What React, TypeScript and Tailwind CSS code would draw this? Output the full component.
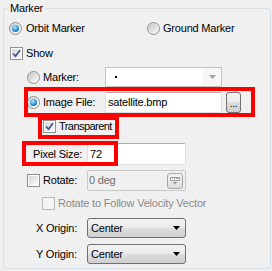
import React from "react";

function Radio({ checked = false }: { checked?: boolean }) {
  return (
    <span className="flex h-[13px] w-[13px] shrink-0 items-center justify-center rounded-full border border-[#8e8f8f] bg-[linear-gradient(135deg,#d0d0d0,#ffffff)]">
      {checked ? (
        <span className="h-[7px] w-[7px] rounded-full bg-[radial-gradient(circle_at_40%_35%,#b5ecff,#2a8fd6_55%,#0b4a86)]" />
      ) : (
        <span className="h-[9px] w-[9px] rounded-full bg-[linear-gradient(135deg,#c9c9c9,#f7f7f7)]" />
      )}
    </span>
  );
}

function Check({ checked = false, disabled = false }: { checked?: boolean; disabled?: boolean }) {
  return (
    <span
      className={
        disabled
          ? "flex h-[13px] w-[13px] shrink-0 border border-[#b8b8b8] bg-[#f4f4f4]"
          : "flex h-[13px] w-[13px] shrink-0 items-center justify-center border border-[#8e8f8f] bg-white p-[1px]"
      }
    >
      {!disabled && (
        <span className="relative h-full w-full bg-[linear-gradient(135deg,#d6d6d6,#fafafa)]">
          {checked && (
            <svg className="absolute -left-[1px] -top-[1px]" width="11" height="11" viewBox="0 0 11 11">
              <path d="M2 5.5 L4.5 8.2 L9 2.2" fill="none" stroke="#42578f" strokeWidth="1.8" />
            </svg>
          )}
        </span>
      )}
    </span>
  );
}

function Combo({ value }: { value: string }) {
  return (
    <div className="flex h-[20px] w-[99px] items-center justify-between rounded-[3px] border border-[#707070] bg-[linear-gradient(to_bottom,#f2f2f2_0%,#ebebeb_50%,#dddddd_50%,#cfcfcf_100%)] pl-[3px] pr-[5px]">
      <span>{value}</span>
      <svg width="7" height="4" viewBox="0 0 7 4">
        <path d="M0 0 H7 L3.5 4 Z" fill="#000" />
      </svg>
    </div>
  );
}

export default function App() {
  return (
    <div
      className="relative h-[271px] w-[272px] overflow-hidden bg-[#f0f0f0] pl-[3px] pt-[8px] text-[11px] leading-[13px] tracking-[-0.2px] text-black"
      style={{ fontFamily: '"Liberation Sans", Arial, sans-serif' }}
    >
      <div className="relative h-[261px] w-[268px] rounded-[3px] border border-[#d5dfe5]">
        <span className="absolute -top-[7px] left-[4px] bg-[#f0f0f0] px-[2px]">Marker</span>

        <div className="flex flex-col">
          <div className="mt-[13px] flex h-[13px] items-center pl-[5px]">
            <div className="flex w-[138px] items-center gap-[4px]">
              <Radio checked />
              <span>Orbit Marker</span>
            </div>
            <div className="flex items-center gap-[3px]">
              <Radio />
              <span>Ground Marker</span>
            </div>
          </div>

          <div className="mt-[12px] flex h-[13px] items-center gap-[3px] pl-[6px]">
            <Check checked />
            <span>Show</span>
          </div>

          <div className="mt-[7px] flex h-[20px] items-center pl-[23px]">
            <Radio />
            <span className="ml-[3px] w-[62px]">Marker:</span>
            <div className="flex h-[20px] w-[117px] border border-[#c3c3c3] bg-white">
              <span className="flex flex-1 items-center pl-[9px]">
                <span className="h-[2px] w-[2px] bg-black" />
              </span>
              <span className="flex w-[18px] items-center justify-center bg-[#f7f7f7]">
                <svg width="7" height="4" viewBox="0 0 7 4">
                  <path d="M0 0 H7 L3.5 4 Z" fill="#a3a3a3" />
                </svg>
              </span>
            </div>
          </div>

          <div className="mt-[5px] flex h-[21px] items-center pl-[23px]">
            <Radio checked />
            <span className="ml-[3px] w-[62px]">Image File:</span>
            <div className="flex h-[21px] w-[117px] items-center rounded-[2px] border border-[#dbdfe6] border-t-[#abadb3] bg-white pl-[2px]">
              satellite.bmp
            </div>
            <div className="ml-[4px] flex h-[21px] w-[15px] items-end justify-center rounded-[3px] border border-[#707070] bg-[linear-gradient(to_bottom,#f2f2f2_0%,#ebebeb_50%,#dddddd_50%,#cfcfcf_100%)] pb-[3px] text-[10px] leading-[10px]">
              ...
            </div>
          </div>

          <div className="mt-[7px] flex h-[13px] items-center gap-[3px] pl-[39px]">
            <Check checked />
            <span className="tracking-[-0.55px]">Transparent</span>
          </div>

          <div className="mt-[10px] flex h-[22px] items-center pl-[29px]">
            <span className="w-[54px]">Pixel Size:</span>
            <div className="flex h-[22px] w-[99px] items-center rounded-[2px] border border-[#dbdfe6] border-t-[#abadb3] bg-white pl-[2px]">
              72
            </div>
          </div>

          <div className="mt-[5px] flex h-[21px] items-center pl-[23px]">
            <Check />
            <span className="ml-[3px] w-[44px]">Rotate:</span>
            <div className="flex h-[21px] w-[99px] items-center justify-between rounded-[2px] border border-[#c8c8c8] bg-[#f0f0f0] pl-[1px] pr-[2px] text-[#6d6d6d]">
              <span>0 deg</span>
              <svg width="16" height="16" viewBox="0 0 16 16">
                <defs>
                  <linearGradient id="ib" x1="0" y1="0" x2="0" y2="1">
                    <stop offset="0" stopColor="#f4f4f4" />
                    <stop offset="1" stopColor="#dcdcdc" />
                  </linearGradient>
                </defs>
                <rect x="0.5" y="0.5" width="15" height="15" rx="2.5" fill="url(#ib)" stroke="#a5a5a5" />
                <path d="M3.5 4.5 H12.5 V7.5 H3.5 Z" fill="#fff" stroke="#9c9c9c" />
                <path d="M5.5 4.5 V6 M7.5 4.5 V6.5 M9.5 4.5 V6 M11 4.5 V6" stroke="#9c9c9c" />
                <path d="M5.5 9 H10.5 L8 11.5 Z" fill="#9c9c9c" />
              </svg>
            </div>
          </div>

          <div className="mt-[6px] flex h-[13px] items-center gap-[3px] pl-[38px] text-[#8a8a8a]">
            <Check disabled />
            <span>Rotate to Follow Velocity Vector</span>
          </div>

          <div className="mt-[8px] flex h-[20px] items-center pl-[32px]">
            <span className="w-[51px]">X Origin:</span>
            <Combo value="Center" />
          </div>

          <div className="mt-[6px] flex h-[20px] items-center pl-[32px]">
            <span className="w-[51px]">Y Origin:</span>
            <Combo value="Center" />
          </div>
        </div>
      </div>

      <div className="absolute left-[24px] top-[87px] h-[30px] w-[231px] border-[4px] border-[#ff0000]" />
      <div className="absolute left-[38px] top-[116px] h-[23px] w-[81px] border-[4px] border-[#ff0000]" />
      <div className="absolute left-[22px] top-[141px] h-[25px] w-[96px] border-[4px] border-[#ff0000]" />
    </div>
  );
}
